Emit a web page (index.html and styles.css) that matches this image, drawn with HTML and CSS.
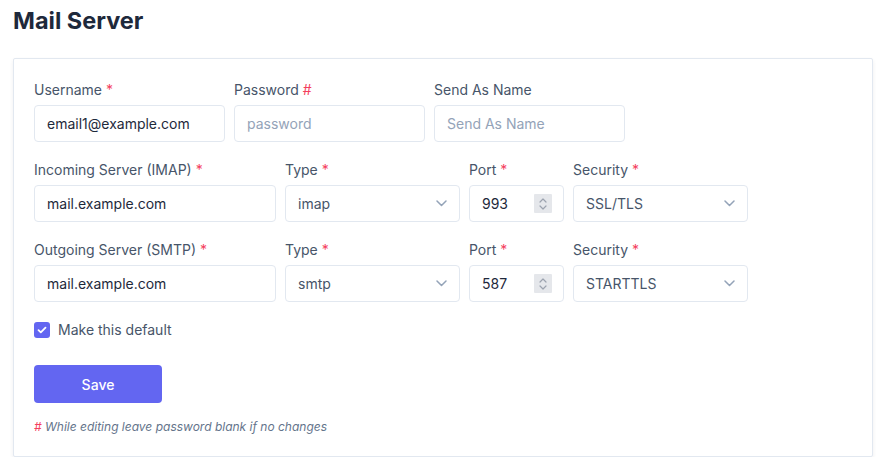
FILE: index.html
```html
<!DOCTYPE html>
<html lang="en">
<head>
<meta charset="utf-8">
<title>Mail Server</title>
<link rel="stylesheet" href="styles.css">
</head>
<body>
<div class="page">
  <h1 class="title">Mail Server</h1>
  <div class="card">
    <div class="row">
      <div class="field w191">
        <label class="label">Username <span class="req">*</span></label>
        <div class="control"><span class="value">email1@example.com</span></div>
      </div>
      <div class="field w191">
        <label class="label">Password <span class="req">#</span></label>
        <div class="control"><span class="placeholder">password</span></div>
      </div>
      <div class="field w191">
        <label class="label">Send As Name</label>
        <div class="control"><span class="placeholder">Send As Name</span></div>
      </div>
    </div>

    <div class="row">
      <div class="field w242">
        <label class="label">Incoming Server (IMAP) <span class="req">*</span></label>
        <div class="control"><span class="value">mail.example.com</span></div>
      </div>
      <div class="field w175">
        <label class="label">Type <span class="req">*</span></label>
        <div class="control select"><span class="sel-value">imap</span>
          <svg class="chev" width="11" height="7" viewBox="0 0 11 7"><path d="M1 1l4.5 4.5L10 1" fill="none" stroke="#94a3b8" stroke-width="1.5" stroke-linecap="round" stroke-linejoin="round"/></svg>
        </div>
      </div>
      <div class="field w95">
        <label class="label">Port <span class="req">*</span></label>
        <div class="control number"><span class="value">993</span>
          <span class="spin"><svg width="10" height="14" viewBox="0 0 10 14"><path d="M2 5l3-3 3 3M2 9l3 3 3-3" fill="none" stroke="#9ca3af" stroke-width="1.2" stroke-linecap="round" stroke-linejoin="round"/></svg></span>
        </div>
      </div>
      <div class="field w175">
        <label class="label">Security <span class="req">*</span></label>
        <div class="control select"><span class="sel-value">SSL/TLS</span>
          <svg class="chev" width="11" height="7" viewBox="0 0 11 7"><path d="M1 1l4.5 4.5L10 1" fill="none" stroke="#94a3b8" stroke-width="1.5" stroke-linecap="round" stroke-linejoin="round"/></svg>
        </div>
      </div>
    </div>

    <div class="row">
      <div class="field w242">
        <label class="label">Outgoing Server (SMTP) <span class="req">*</span></label>
        <div class="control"><span class="value">mail.example.com</span></div>
      </div>
      <div class="field w175">
        <label class="label">Type <span class="req">*</span></label>
        <div class="control select"><span class="sel-value">smtp</span>
          <svg class="chev" width="11" height="7" viewBox="0 0 11 7"><path d="M1 1l4.5 4.5L10 1" fill="none" stroke="#94a3b8" stroke-width="1.5" stroke-linecap="round" stroke-linejoin="round"/></svg>
        </div>
      </div>
      <div class="field w95">
        <label class="label">Port <span class="req">*</span></label>
        <div class="control number"><span class="value">587</span>
          <span class="spin"><svg width="10" height="14" viewBox="0 0 10 14"><path d="M2 5l3-3 3 3M2 9l3 3 3-3" fill="none" stroke="#9ca3af" stroke-width="1.2" stroke-linecap="round" stroke-linejoin="round"/></svg></span>
        </div>
      </div>
      <div class="field w175">
        <label class="label">Security <span class="req">*</span></label>
        <div class="control select"><span class="sel-value">STARTTLS</span>
          <svg class="chev" width="11" height="7" viewBox="0 0 11 7"><path d="M1 1l4.5 4.5L10 1" fill="none" stroke="#94a3b8" stroke-width="1.5" stroke-linecap="round" stroke-linejoin="round"/></svg>
        </div>
      </div>
    </div>

    <div class="check-row">
      <span class="checkbox"><svg width="10" height="8" viewBox="0 0 10 8"><path d="M1.5 4.2l2.3 2.2L8.5 1.6" fill="none" stroke="#fff" stroke-width="1.8" stroke-linecap="round" stroke-linejoin="round"/></svg></span>
      <span class="check-label">Make this default</span>
    </div>

    <button class="btn">Save</button>

    <p class="note"><span class="req">#</span> While editing leave password blank if no changes</p>
  </div>
</div>
</body>
</html>
```

FILE: styles.css
```css
* { box-sizing: border-box; }
html, body { margin: 0; padding: 0; background: #fff; }
body {
  font-family: Inter, "Noto Sans", "Liberation Sans", sans-serif;
  color: #1e293b;
}
.page {
  padding: 5px 16px 0 13px;
}
.title {
  margin: 0;
  font-size: 23.5px;
  line-height: 32px;
  font-weight: 700;
  color: #1e293b;
}
.card {
  margin-top: 21px;
  width: 860px;
  border: 1px solid #e2e8f0;
  border-radius: 2px;
  background: #fff;
  padding: 21px 20px 21px 20px;
  box-shadow: 0 2px 4px rgba(15, 23, 42, 0.07);
}
.row {
  display: flex;
  gap: 9px;
  margin-bottom: 18px;
}
.field {
  display: flex;
  flex-direction: column;
  gap: 5px;
}
.w191 { width: 191px; }
.w242 { width: 242px; }
.w175 { width: 175px; }
.w95 { width: 95px; }
.label {
  font-size: 14px;
  line-height: 20px;
  color: #475569;
  font-weight: 400;
}
.req { color: #f43f5e; }
.control {
  height: 37px;
  border: 1px solid #e2e8f0;
  border-radius: 4px;
  padding: 0 12px;
  display: flex;
  align-items: center;
  font-size: 14px;
  background: #fff;
}
.value { color: #1e293b; }
.placeholder { color: #94a3b8; }
.select {
  justify-content: space-between;
  padding-right: 12px;
}
.sel-value { color: #475569; }
.chev { display: block; }
.number {
  justify-content: space-between;
  padding-right: 11px;
}
.spin {
  width: 18px;
  height: 19px;
  background: #e5e7eb;
  border-radius: 1px;
  display: flex;
  align-items: center;
  justify-content: center;
}
.check-row {
  display: flex;
  align-items: center;
  gap: 8px;
  height: 20px;
}
.checkbox {
  width: 16px;
  height: 16px;
  border-radius: 3px;
  background: #6366f1;
  display: flex;
  align-items: center;
  justify-content: center;
}
.check-label {
  font-size: 14px;
  line-height: 20px;
  color: #475569;
}
.btn {
  display: block;
  margin-top: 25px;
  width: 128px;
  height: 38px;
  border: 0;
  border-radius: 4px;
  background: #6366f1;
  color: #fff;
  font-family: inherit;
  font-size: 14px;
  font-weight: 500;
  padding: 0;
}
.note {
  margin: 16px 0 0;
  font-size: 12px;
  line-height: 16px;
  font-style: italic;
  color: #64748b;
}
```
